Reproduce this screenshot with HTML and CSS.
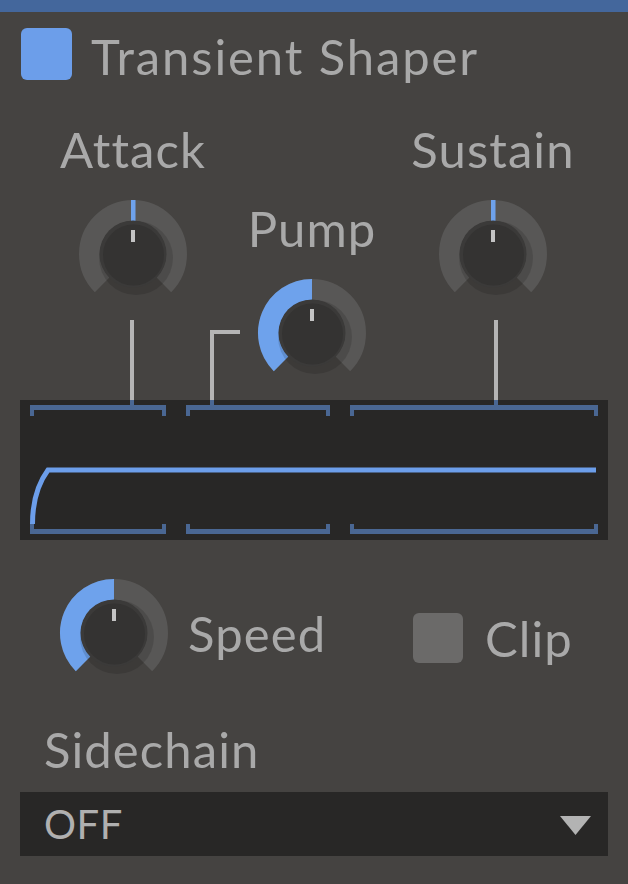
FILE: index.html
```html
<!DOCTYPE html>
<html lang="en">
<head>
    <meta charset="UTF-8">
    <meta name="viewport" content="width=device-width, initial-scale=1.0">
    <title>Transient Shaper</title>
<link rel="stylesheet" href="styles.css">
</head>
<body>
    <div class="topbar"></div>

    <div class="header">
        <div class="checkbox on"></div>
        <div class="title">Transient Shaper</div>
    </div>

    <div class="controls">
        <div class="knob-group attack">
            <div class="label">Attack</div>
            <svg class="knob" viewBox="0 0 110 110" width="110" height="110">
                <path class="track" d="M24.24 85.76 A43.5 43.5 0 1 1 85.76 85.76"/>
                <rect class="tick" x="53" y="1" width="4.5" height="21"/>
                <circle class="shadow" cx="58" cy="59" r="37"/>
                <circle class="body" cx="55" cy="55" r="33.5"/>
                <circle class="face" cx="55.5" cy="56" r="30.5"/>
                <rect class="pointer" x="53" y="31" width="4" height="12"/>
            </svg>
            <div class="stem"></div>
        </div>

        <div class="connector"></div>

        <div class="knob-group pump">
            <div class="label">Pump</div>
            <svg class="knob" viewBox="0 0 110 110" width="110" height="110">
                <path class="track" d="M24.24 85.76 A43.5 43.5 0 1 1 85.76 85.76"/>
                <path class="value" d="M24.24 85.76 A43.5 43.5 0 0 1 55 11.5"/>
                <circle class="shadow" cx="58" cy="59" r="37"/>
                <circle class="body" cx="55" cy="55" r="33.5"/>
                <circle class="face" cx="55.5" cy="56" r="30.5"/>
                <rect class="pointer" x="53" y="31" width="4" height="12"/>
            </svg>
        </div>

        <div class="knob-group sustain">
            <div class="label">Sustain</div>
            <svg class="knob" viewBox="0 0 110 110" width="110" height="110">
                <path class="track" d="M24.24 85.76 A43.5 43.5 0 1 1 85.76 85.76"/>
                <rect class="tick" x="53" y="1" width="4.5" height="21"/>
                <circle class="shadow" cx="58" cy="59" r="37"/>
                <circle class="body" cx="55" cy="55" r="33.5"/>
                <circle class="face" cx="55.5" cy="56" r="30.5"/>
                <rect class="pointer" x="53" y="31" width="4" height="12"/>
            </svg>
            <div class="stem"></div>
        </div>
    </div>

    <div class="display">
        <div class="brackets top">
            <div class="bracket seg1"></div>
            <div class="bracket seg2"></div>
            <div class="bracket seg3"></div>
        </div>
        <svg class="envelope" viewBox="0 0 588 108" width="588" height="108">
            <path d="M12.5 108 C12.5 86, 17 69, 28 54 L576 54"/>
        </svg>
        <div class="brackets bottom">
            <div class="bracket seg1"></div>
            <div class="bracket seg2"></div>
            <div class="bracket seg3"></div>
        </div>
    </div>

    <div class="options">
        <div class="speed-group">
            <svg class="knob" viewBox="0 0 110 110" width="110" height="110">
                <path class="track" d="M24.24 85.76 A43.5 43.5 0 1 1 85.76 85.76"/>
                <path class="value" d="M24.24 85.76 A43.5 43.5 0 0 1 55 11.5"/>
                <circle class="shadow" cx="58" cy="59" r="37"/>
                <circle class="body" cx="55" cy="55" r="33.5"/>
                <circle class="face" cx="55.5" cy="56" r="30.5"/>
                <rect class="pointer" x="53" y="31" width="4" height="12"/>
            </svg>
            <div class="label">Speed</div>
        </div>
        <div class="clip-group">
            <div class="checkbox"></div>
            <div class="label">Clip</div>
        </div>
    </div>

    <div class="label sidechain">Sidechain</div>

    <div class="dropdown">
        <span class="value-text">OFF</span>
        <svg class="arrow" viewBox="0 0 31 19" width="31" height="19">
            <polygon points="0,0 31,0 15.5,19"/>
        </svg>
    </div>
</body>
</html>
```

FILE: styles.css
```css
*{
  margin: 0;
  padding: 0;
  box-sizing: border-box;
}

body{
  width: 628px;
  height: 884px;
  overflow: hidden;
  background-color: #454341;
  font-family: Lato, "Open Sans", sans-serif;
  color: #a9a9a9;
}

.topbar{
  height: 12px;
  background-color: #44679c;
}

.header{
  display: flex;
  align-items: flex-start;
  gap: 19px;
  padding: 16px 0 0 21px;
}

.checkbox{
  width: 51px;
  height: 52px;
  border-radius: 6px;
  background-color: #6b6a69;
}

.checkbox.on{
  background-color: #6c9eea;
}

.title,
.label{
  font-size: 49px;
  line-height: 44px;
  letter-spacing: 1.1px;
  white-space: nowrap;
}

.title{
  line-height: 56px;
  letter-spacing: 1.9px;
}

.controls{
  display: flex;
  align-items: flex-end;
  margin-top: 43px;
  height: 273px;
}

.knob-group{
  width: 110px;
  display: flex;
  flex-direction: column;
  align-items: center;
}

.knob-group .label{
  margin-bottom: 28px;
}

.attack{
  margin-left: 78px;
}

.pump{
  margin-left: 17px;
  margin-bottom: 12px;
}

.sustain{
  margin-left: 71px;
}

.stem{
  width: 4px;
  height: 80px;
  margin-top: 11px;
  margin-left: -3px;
  background-color: #b5b5b5;
}

.sustain .stem{
  margin-left: 5px;
}

.connector{
  width: 30px;
  height: 70px;
  margin-left: 22px;
  border-top: 4px solid #b5b5b5;
  border-left: 4px solid #b5b5b5;
}

/* knobs */
.knob{
  display: block;
  flex-shrink: 0;
}

.knob .track{
  fill: none;
  stroke: #585756;
  stroke-width: 21;
}

.knob .value{
  fill: none;
  stroke: #6ea2ec;
  stroke-width: 21;
}

.knob .tick{
  fill: #6ea2ec;
}

.knob .shadow{
  fill: rgba(0, 0, 0, 0.13);
}

.knob .body{
  fill: #3b3a39;
}

.knob .face{
  fill: #343332;
}

.knob .pointer{
  fill: #c4c4c4;
}

/* envelope display */
.display{
  margin: 0 20px;
  height: 140px;
  background-color: #282726;
  display: flex;
  flex-direction: column;
}

.brackets{
  display: flex;
  gap: 20px;
  padding: 0 10px;
}

.brackets.top{
  padding-top: 5px;
}

.bracket{
  position: relative;
  border: 4px solid #4a6793;
}

.bracket.seg1{ width: 136px; }
.bracket.seg2{ width: 144px; }
.bracket.seg3{ width: 248px; }

.top .bracket{
  height: 11px;
  border-top-width: 5px;
  border-bottom: none;
}

.bottom .bracket{
  height: 10px;
  border-bottom-width: 5px;
  border-top: none;
}

.top .bracket::before{
  content: "";
  position: absolute;
  top: -10px;
  width: 4px;
  height: 5px;
  background-color: #4a6793;
}

.top .seg1::before{ left: 96px; }
.top .seg2::before{ left: 20px; }
.top .seg3::before{ left: 140px; }

.envelope{
  display: block;
}

.envelope path{
  fill: none;
  stroke: #6c9eea;
  stroke-width: 5;
}

/* speed + clip */
.options{
  display: flex;
  align-items: center;
  margin-top: 38px;
}

.speed-group{
  width: 413px;
  padding-left: 59px;
  display: flex;
  align-items: center;
  gap: 19px;
}

.clip-group{
  display: flex;
  align-items: center;
  gap: 22px;
  margin-top: 10px;
}

.clip-group .checkbox{
  width: 50px;
  height: 50px;
}

.sidechain{
  margin: 39px 0 0 44px;
}

.dropdown{
  margin: 21px 20px 0;
  height: 64px;
  background-color: #282726;
  display: flex;
  justify-content: space-between;
  align-items: center;
  padding: 0 17px 0 24px;
}

.value-text{
  font-size: 40px;
  letter-spacing: 0.5px;
  color: #b0b0b0;
}

.arrow{
  display: block;
  margin-top: 2px;
}

.arrow polygon{
  fill: #b3b3b3;
}
```
